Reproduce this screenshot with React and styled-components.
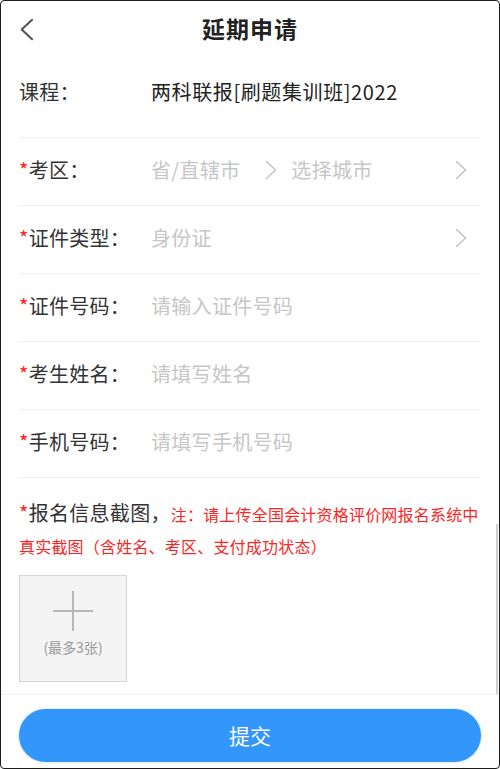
import React from 'react';
import styled, { createGlobalStyle } from 'styled-components';

const GlobalStyle = createGlobalStyle`
  html, body {
    margin: 0;
    padding: 0;
    background: #fff;
  }
  body {
    font-family: "Noto Sans CJK SC", "Noto Sans", sans-serif;
    color: #333;
  }
  * {
    box-sizing: border-box;
  }
`;

const Chevron = ({ size = 20, color = '#c4c4c4', width = 1.6, dir = 'right' }) => (
  <svg width={size * 0.6} height={size} viewBox="0 0 12 20" fill="none">
    <polyline
      points={dir === 'right' ? '1.5,1.5 10.5,10 1.5,18.5' : '10.5,1.5 1.5,10 10.5,18.5'}
      stroke={color}
      strokeWidth={width}
      strokeLinecap="round"
      strokeLinejoin="round"
    />
  </svg>
);

const fields = [
  { label: '证件类型', value: '身份证', arrow: true },
  { label: '证件号码', value: '请输入证件号码' },
  { label: '考生姓名', value: '请填写姓名' },
  { label: '手机号码', value: '请填写手机号码' },
];

const App = () => {
  return (
    <>
      <GlobalStyle />
      <Frame>
        <Header>
          <BackButton>
            <Chevron dir="left" size={23} color="#555" width={1.8} />
          </BackButton>
          <Title>延期申请</Title>
          <span />
        </Header>

        <Content>
          <Row $first>
            <Label>课程：</Label>
            <Value $filled>两科联报[刷题集训班]2022</Value>
          </Row>

          <Row>
            <Label><Star>*</Star>考区：</Label>
            <Value>
              <Picker>
                <span>省/直辖市</span>
                <Chevron size={20} />
                <span>选择城市</span>
              </Picker>
            </Value>
            <Chevron size={20} />
          </Row>

          {fields.map((f) => (
            <Row key={f.label}>
              <Label><Star>*</Star>{f.label}：</Label>
              <Value>{f.value}</Value>
              {f.arrow && <Chevron size={20} />}
            </Row>
          ))}

          <UploadSection>
            <UploadTitle>
              <Star>*</Star>报名信息截图，
              <Note>注：请上传全国会计资格评价网报名系统中真实截图（含姓名、考区、支付成功状态）</Note>
            </UploadTitle>
            <UploadBox>
              <Plus />
              <UploadHint>(最多3张)</UploadHint>
            </UploadBox>
          </UploadSection>
          <ScrollThumb />
        </Content>

        <Footer>
          <SubmitButton>提交</SubmitButton>
        </Footer>
      </Frame>
    </>
  );
};

export default App;

const Frame = styled.div`
  width: 500px;
  height: 769px;
  border: 1px solid #1c1c1c;
  border-radius: 4px;
  overflow: hidden;
  display: flex;
  flex-direction: column;
  background: #fff;
`;

const Header = styled.header`
  height: 58px;
  flex-shrink: 0;
  display: grid;
  grid-template-columns: 60px 1fr 60px;
  align-items: center;
`;

const BackButton = styled.div`
  display: flex;
  align-items: center;
  padding-left: 19px;
  padding-bottom: 1px;
`;

const Title = styled.h1`
  margin: 0 0 5px;
  text-align: center;
  font-size: 23px;
  line-height: 30px;
  font-weight: 700;
  color: #222;
  letter-spacing: 1px;
`;

const Content = styled.main`
  position: relative;
  flex: 1;
  padding: 0 18px;
`;

const Row = styled.div`
  height: ${(p) => (p.$first ? '79px' : '68px')};
  padding-bottom: ${(p) => (p.$first ? '13px' : '4px')};
  display: flex;
  align-items: center;
  border-bottom: 1px solid #efefef;
  font-size: 20px;
  padding-right: 14px;
`;

const Label = styled.div`
  width: 132px;
  flex-shrink: 0;
  color: #333;
  white-space: nowrap;
  letter-spacing: 0.3px;
`;

const Star = styled.span`
  color: #ff2020;
`;

const Value = styled.div`
  flex: 1;
  color: ${(p) => (p.$filled ? '#222' : '#c6c6c6')};
  white-space: nowrap;
  letter-spacing: ${(p) => (p.$filled ? '0.6px' : '0.3px')};
`;

const Picker = styled.div`
  display: flex;
  align-items: center;

  svg {
    margin: 0 14px 0 25px;
  }
`;

const UploadSection = styled.section`
  padding-top: 19px;
`;

const UploadTitle = styled.p`
  margin: 0;
  font-size: 20px;
  line-height: 32px;
  color: #333;
  letter-spacing: 0.3px;
`;

const Note = styled.span`
  font-size: 16px;
  line-height: 30px;
  color: #ff2424;
  letter-spacing: 0.2px;
`;

const UploadBox = styled.div`
  margin-top: 14px;
  width: 108px;
  height: 107px;
  background: #f4f4f4;
  border: 1px solid #d4d4d4;
  display: flex;
  flex-direction: column;
  align-items: center;
  padding-top: 15px;
`;

const Plus = styled.div`
  position: relative;
  width: 40px;
  height: 40px;

  &::before,
  &::after {
    content: '';
    position: absolute;
    background: #b8b8b8;
  }
  &::before {
    left: 0;
    right: 0;
    top: 19px;
    height: 2px;
  }
  &::after {
    top: 0;
    bottom: 0;
    left: 19px;
    width: 2px;
  }
`;

const UploadHint = styled.div`
  margin-top: 6px;
  font-size: 14px;
  color: #9a9a9a;
`;

const ScrollThumb = styled.div`
  position: absolute;
  right: 1px;
  top: 465px;
  bottom: 0;
  width: 2px;
  background: #cfcfcf;
`;

const Footer = styled.footer`
  flex-shrink: 0;
  height: 74px;
  border-top: 1px solid #efefef;
  padding: 14px 18px 6px;
`;

const SubmitButton = styled.button`
  width: 100%;
  height: 53px;
  border: none;
  border-radius: 27px;
  background: #3396fa;
  color: #fff;
  font-family: inherit;
  font-size: 21px;
  padding-bottom: 3px;
  box-shadow: 0 0 3px rgba(51, 150, 250, 0.35);
`;
